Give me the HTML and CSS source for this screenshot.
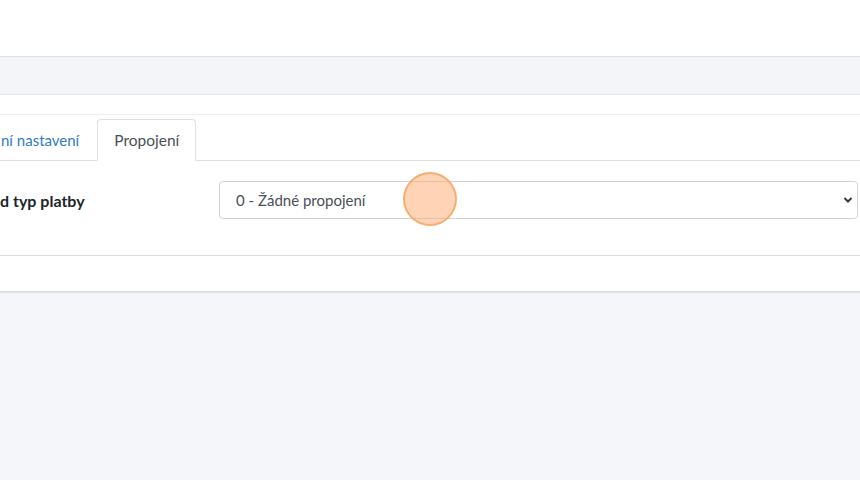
FILE: index.html
```html
<!DOCTYPE html>
<html lang="cs">
<head>
<meta charset="utf-8">
<link rel="stylesheet" href="styles.css">
</head>
<body>
<header class="topbar"></header>
<div class="subbar"></div>
<main class="content">
  <section class="card">
    <nav class="tabs">
      <a class="tab">ní nastavení</a>
      <a class="tab active">Propojení</a>
    </nav>
    <div class="card-body">
      <div class="form-row">
        <label class="label">d typ platby</label>
        <div class="select-wrap">
          <select class="select">
            <option>0 - Žádné propojení</option>
          </select>
          <svg class="chev" width="10" height="8" viewBox="0 0 10 8"><path d="M1.5 2 L5 5.5 L8.5 2" fill="none" stroke="#343a40" stroke-width="2"/></svg>
          <span class="cursor"></span>
        </div>
      </div>
    </div>
  </section>
  <div class="footer-strip"></div>
</main>
</body>
</html>
```
FILE: styles.css
```css
* { box-sizing: border-box; }
html, body { margin: 0; padding: 0; }
body {
  background: #f4f6f9;
  font-family: "Source Sans Pro", Lato, "Noto Sans", sans-serif;
  font-size: 15px;
  color: #212529;
  width: 860px;
  height: 480px;
  overflow: hidden;
}
.topbar {
  height: 57px;
  background: #fff;
  border-bottom: 1px solid #dee2e6;
}
.subbar {
  height: 38px;
  background: #f4f5f9;
  border-bottom: 1px solid #e4e6ea;
}
.content {
  background: #fff;
  padding-top: 19px;
}
.card {
  border-top: 1px solid #eceef0;
  border-bottom: 1px solid #dcdde0;
  background: #fff;
  box-shadow: 0 1px 2px rgba(0,0,0,0.1);
  padding-top: 4px;
}
.tabs {
  display: flex;
  border-bottom: 1px solid #dee2e6;
  height: 42px;
}
.tab {
  display: flex;
  align-items: center;
  height: 42px;
  padding: 0 16px;
  font-size: 15.5px;
  color: #2f7dc0;
  border: 1px solid transparent;
  border-top-left-radius: 4px;
  border-top-right-radius: 4px;
}
.tab:first-child { padding-left: 0; font-size: 15px; }
.tab.active {
  color: #495057;
  background: #fff;
  border-color: #dee2e6 #dee2e6 #fff;
  margin-bottom: -1px;
  margin-left: 1px;
}
.card-body {
  padding: 20px 2px 36px 0;
}
.form-row {
  display: flex;
  align-items: center;
}
.label {
  width: 219px;
  font-size: 16px;
  font-weight: 700;
  color: #212529;
}
.select-wrap {
  position: relative;
  flex: 1;
}
.select {
  appearance: none;
  -webkit-appearance: none;
  width: 100%;
  height: 38px;
  border: 1px solid #ced4da;
  border-radius: 4px;
  background: #fff;
  padding: 0 16px;
  font-family: inherit;
  font-size: 15px;
  color: #495057;
}
.chev {
  position: absolute;
  right: 5px;
  top: 15px;
}
.cursor {
  position: absolute;
  left: 184px;
  top: -9px;
  width: 54px;
  height: 54px;
  border-radius: 50%;
  background: rgba(255, 170, 110, 0.5);
  border: 2px solid rgba(244, 160, 90, 0.75);
}
.footer-strip {
  height: 36px;
  background: #fff;
  border-bottom: 1px solid #dcdde0;
  box-shadow: 0 1px 1px rgba(0,0,0,0.06);
}
```
